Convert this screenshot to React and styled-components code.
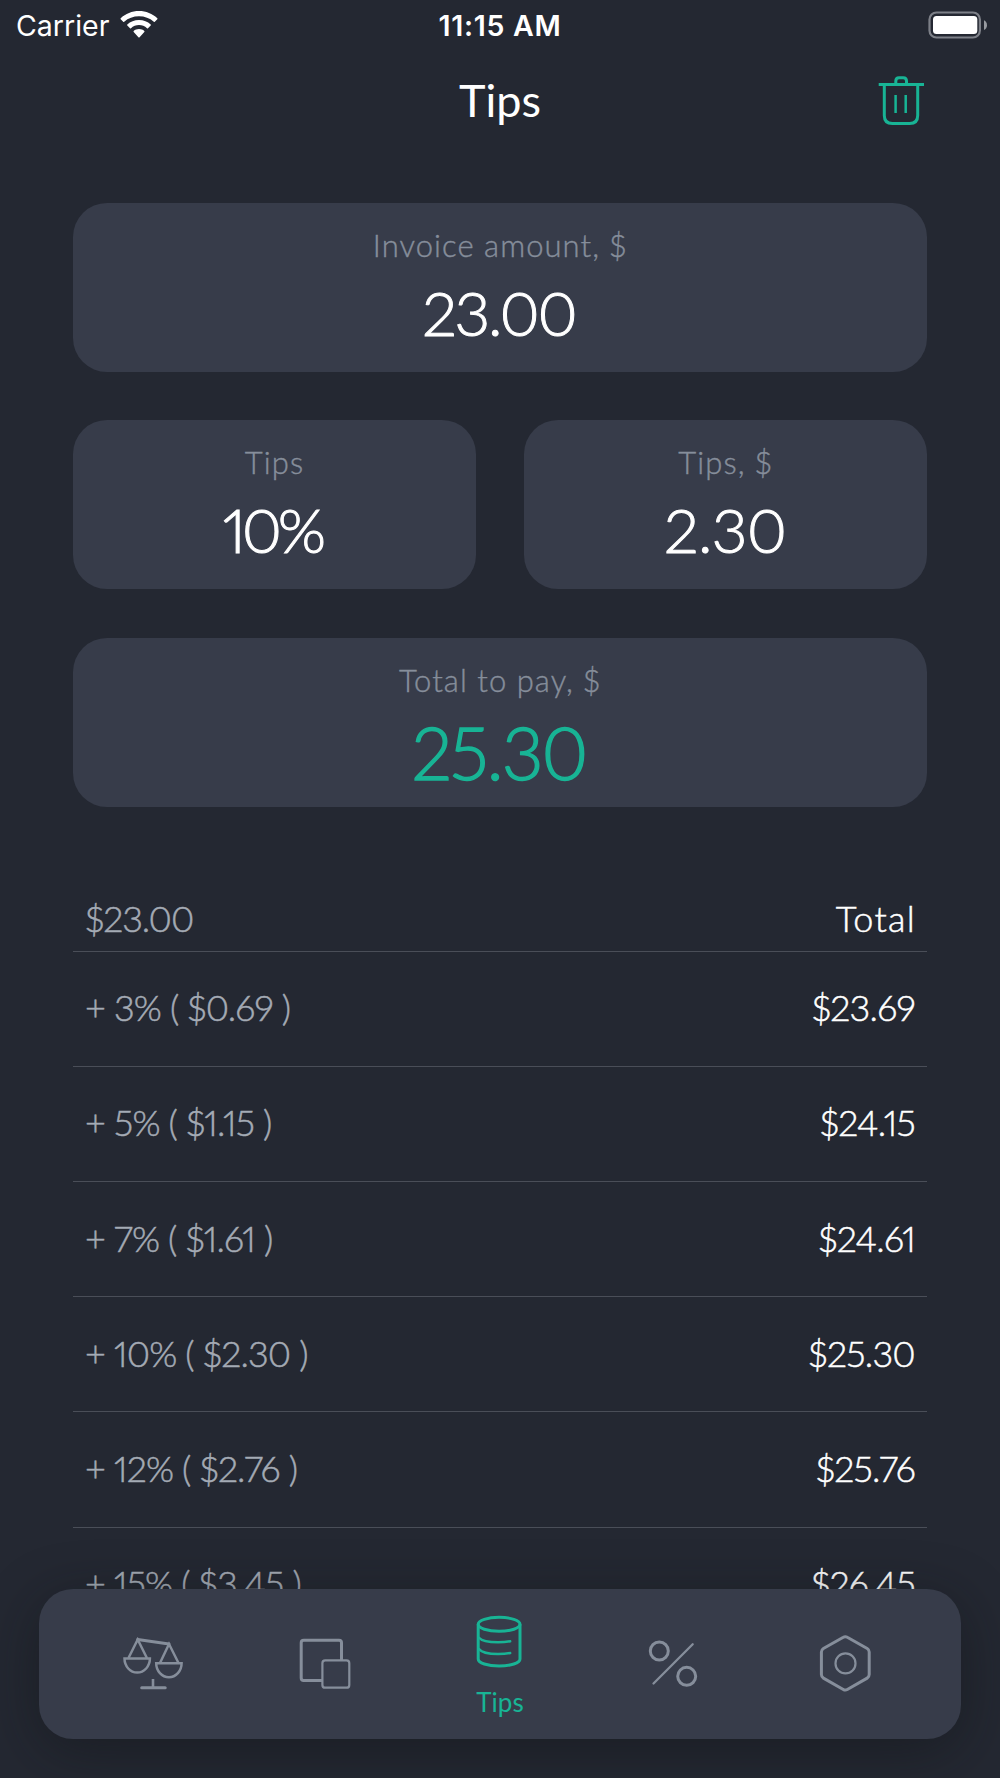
import React from "react";
import styled, { createGlobalStyle } from "styled-components";

const COLORS = {
  background: "#242832",
  panel: "#373c4a",
  label: "#868e9b",
  muted: "#a4abb5",
  line: "#4a4e58",
  green: "#18b495",
  white: "#ffffff",
};

const ROWS = [
  { label: "+ 3% ( $0.69 )", total: "$23.69" },
  { label: "+ 5% ( $1.15 )", total: "$24.15" },
  { label: "+ 7% ( $1.61 )", total: "$24.61" },
  { label: "+ 10% ( $2.30 )", total: "$25.30" },
  { label: "+ 12% ( $2.76 )", total: "$25.76" },
  { label: "+ 15% ( $3.45 )", total: "$26.45" },
];

function WifiIcon() {
  return (
    <svg width="38" height="28" viewBox="0 0 38 28" fill={COLORS.white}>
      <path d="M19 0C12 0 5.500 2.700 .7 7.200q-.5.500 0 1l2.500 2.500q.5.500 1 0C8.200 7.100 13.400 5.200 19 5.200s10.800 1.900 14.800 5.500q.5.500 1 0l2.500-2.500q.5-.5 0-1C32.500 2.700 26 0 19 0z" />
      <path d="M19 9c-4.600 0-8.600 1.700-11.700 4.500q-.5.500 0 1l2.700 2.700q.5.500 1 0c2.200-1.900 5-3.100 8-3.100s5.800 1.200 8 3.100q.5.500 1 0l2.700-2.700q.5-.5 0-1C27.600 10.700 23.600 9 19 9z" />
      <path d="M19 18c-2.100 0-3.900.7-5.300 1.900q-.5.500 0 1l4.700 5.400q.6.600 1.200 0l4.700-5.400q.5-.5 0-1C22.900 18.700 21.100 18 19 18z" />
    </svg>
  );
}

function BatteryIcon() {
  return (
    <svg width="60" height="28" viewBox="0 0 60 28">
      <rect
        x="1.5"
        y="1.5"
        width="50.4"
        height="25"
        rx="7"
        fill="none"
        stroke="#7d8088"
        strokeWidth="2.2"
      />
      <rect x="5" y="5" width="44.3" height="18" rx="3.5" fill="#fff" />
      <path d="M56 9.300c1.800.8 3 2.700 3 4.900s-1.200 4.100-3 4.900z" fill="#989ba1" />
    </svg>
  );
}

function TrashIcon() {
  return (
    <LineIcon viewBox="0 0 64 64">
      <path d="M8.700 14.500H54M25.800 14.500V11q0-3.200 3.200-3.200h4.300q3.200 0 3.200 3.200v3.500" />
      <path d="M14.300 14.500V45.500q0 8 8 8H39.700q8 0 8-8V14.500" />
      <path d="M25.600 25V43M35.700 25V43" strokeWidth="2.5" />
    </LineIcon>
  );
}

function ScalesIcon() {
  return (
    <LineIcon viewBox="0 0 64 64">
      <g strokeWidth="2.5">
        <path d="M7.500 26 16.700 7.500 25.900 26M39 31 48 12 57.500 31" />
        <path d="M3.500 26.600H28.900a12.700 14 0 0 1-25.400 0zM35.200 31.200H60.600a12.700 14 0 0 1-25.400 0z" />
      </g>
      <path d="M16.700 7.500 48 11.900" strokeLinecap="round" />
      <path d="M32 47V55.700" strokeWidth="2.6" />
      <path d="M20.700 55.700H44.200" strokeLinecap="round" />
    </LineIcon>
  );
}

function UnitsIcon() {
  return (
    <LineIcon viewBox="1 0 64 64">
      <rect x="8.2" y="8.2" width="40.3" height="40.3" rx="2.5" />
      <rect
        x="29.4"
        y="28.4"
        width="26.9"
        height="27.3"
        rx="2.8"
        strokeWidth="2.2"
        fill={COLORS.panel}
      />
    </LineIcon>
  );
}

function CoinsIcon() {
  return (
    <LineIcon viewBox="0 0 64 64">
      <ellipse cx="32.1" cy="14.3" rx="20.9" ry="7" />
      <path d="M11.200 14.300V49c0 4 9.400 7 20.900 7s20.900-3 20.900-7V14.300" />
      <g strokeWidth="2.4" strokeLinecap="round">
        <path d="M12 27.800c2.500 3 9 4.500 19 4.500 5 0 9-.4 12.200-1" />
        <path d="M12 39c2.500 3.500 9 5 19 5 5 0 9-.4 12.200-1" />
      </g>
    </LineIcon>
  );
}

function PercentIcon() {
  return (
    <LineIcon viewBox="-1 0 64 64">
      <circle cx="18.3" cy="19" r="9" />
      <circle cx="45.7" cy="44.3" r="9" />
      <path d="M51.700 12.200 12.500 51.500" strokeWidth="2.3" strokeLinecap="round" />
    </LineIcon>
  );
}

function SettingsIcon() {
  return (
    <LineIcon viewBox="0 0 64 64">
      <path d="M30.300 5.300q2-1.200 4 0L54.200 16.500q2 1.200 2 3.500V42.600q0 2.300-2 3.500L34.300 57.500q-2 1.200-4 0L10.400 46.100q-2-1.200-2-3.500V20q0-2.300 2-3.500z" />
      <circle cx="32.5" cy="31.4" r="10" strokeWidth="2.2" />
    </LineIcon>
  );
}

function AmountCard({ label, value, spacing, total }) {
  return (
    <Card>
      <CardLabel>{label}</CardLabel>
      <CardValue $total={total} $spacing={spacing}>
        {value}
      </CardValue>
    </Card>
  );
}

function App() {
  return (
    <Screen>
      <GlobalStyle />
      <StatusBar>
        <Carrier>
          <span>Carrier</span>
          <WifiIcon />
        </Carrier>
        <Clock>11:15 AM</Clock>
        <Battery>
          <BatteryIcon />
        </Battery>
      </StatusBar>

      <Header>
        <Title>Tips</Title>
        <ClearButton aria-label="Clear">
          <TrashIcon />
        </ClearButton>
      </Header>

      <Content>
        <Cards>
          <AmountCard label="Invoice amount, $" value="23.00" spacing={-2.2} />
          <CardPair>
            <AmountCard label="Tips" value="10%" spacing={-4.3} />
            <AmountCard label="Tips, $" value="2.30" spacing={-0.7} />
          </CardPair>
          <AmountCard
            label="Total to pay, $"
            value="25.30"
            spacing={-1.8}
            total
          />
        </Cards>

        <TableHead>
          <Muted $spacing={-1.1}>$23.00</Muted>
          <HeadTotal $spacing={1.3}>Total</HeadTotal>
        </TableHead>
        {ROWS.map((row) => (
          <TableRow key={row.label}>
            <Muted $spacing={-0.85}>{row.label}</Muted>
            <Total $spacing={-0.75}>{row.total}</Total>
          </TableRow>
        ))}
      </Content>

      <TabBar>
        <Tab>
          <ScalesIcon />
        </Tab>
        <Tab>
          <UnitsIcon />
        </Tab>
        <Tab $active>
          <CoinsIcon />
          <TabLabel>Tips</TabLabel>
        </Tab>
        <Tab>
          <PercentIcon />
        </Tab>
        <Tab>
          <SettingsIcon />
        </Tab>
      </TabBar>
    </Screen>
  );
}

const GlobalStyle = createGlobalStyle`
  * {
    box-sizing: border-box;
  }
  body {
    margin: 0;
    background: ${COLORS.background};
  }
`;

const Screen = styled.div`
  position: relative;
  width: 1000px;
  height: 1778px;
  overflow: hidden;
  background: ${COLORS.background};
  color: ${COLORS.white};
  font-family: Lato, "Open Sans", sans-serif;
  font-weight: 300;
  font-variant-numeric: proportional-nums;
`;

const LineIcon = styled.svg.attrs((props) => ({
  strokeWidth: props.strokeWidth || 3,
}))`
  display: block;
  flex: none;
  width: 64px;
  height: 64px;
  fill: none;
  stroke: currentColor;
`;

const StatusBar = styled.div`
  display: grid;
  grid-template-columns: 1fr auto 1fr;
  align-items: center;
  height: 50px;
  padding: 1px 12px 0;
  font-family: Inter, sans-serif;
  font-size: 28.5px;
  line-height: 48px;
`;

const Carrier = styled.div`
  display: flex;
  align-items: center;
  gap: 11px;
  padding-left: 4px;
  font-weight: 400;

  svg {
    margin-bottom: 2px;
  }
`;

const Clock = styled.div`
  font-weight: 600;
  letter-spacing: 0.7px;
`;

const Battery = styled.div`
  display: flex;
  justify-content: flex-end;
  padding-bottom: 2px;
`;

const Header = styled.div`
  display: grid;
  grid-template-columns: 1fr auto 1fr;
  align-items: center;
  height: 153px;
  padding: 0 66px 51px;
`;

const Title = styled.h1`
  grid-column: 2;
  margin: 0;
  padding-bottom: 3px;
  font-size: 45px;
  font-weight: 400;
  line-height: 60px;
`;

const ClearButton = styled.button`
  justify-self: end;
  padding: 2px 0 0;
  border: none;
  background: none;
  color: ${COLORS.green};
`;

const Content = styled.div`
  padding: 0 73px;
`;

const Cards = styled.div`
  display: flex;
  flex-direction: column;
  gap: 48.3px;
`;

const CardPair = styled.div`
  display: grid;
  grid-template-columns: 1fr 1fr;
  gap: 48px;
`;

const Card = styled.div`
  height: 169px;
  padding-top: 22px;
  border-radius: 34px;
  background: ${COLORS.panel};
  text-align: center;
`;

const CardLabel = styled.div`
  color: ${COLORS.label};
  font-size: 31px;
  line-height: 40px;
  letter-spacing: 0.034em;
  -webkit-text-stroke: 0.4px currentColor;
`;

/* the indent evens out the spacing after the last digit, so the value stays centred */
const CardValue = styled.div`
  margin-top: ${(props) => (props.$total ? 17.5 : 12)}px;
  color: ${(props) => (props.$total ? COLORS.green : COLORS.white)};
  font-size: ${(props) => (props.$total ? 72 : 62)}px;
  line-height: 70px;
  letter-spacing: ${(props) => props.$spacing}px;
  text-indent: ${(props) => props.$spacing}px;
  -webkit-text-stroke: ${(props) => (props.$total ? 1.4 : 1)}px currentColor;
`;

const TableHead = styled.div`
  display: flex;
  justify-content: space-between;
  height: 145px;
  padding: 87px 12px 0;
  border-bottom: 1px solid ${COLORS.line};
  font-size: 36px;
  line-height: 48px;
  -webkit-text-stroke: 0.5px currentColor;
`;

const TableRow = styled(TableHead)`
  align-items: center;
  height: 115.2px;
  padding: 0 12px 3px;
`;

const Muted = styled.span`
  color: ${COLORS.muted};
  letter-spacing: ${(props) => props.$spacing}px;
`;

const Total = styled.span`
  letter-spacing: ${(props) => props.$spacing}px;
`;

const HeadTotal = styled(Total)`
  margin-right: -1px;
`;

const TabBar = styled.nav`
  position: absolute;
  left: 39px;
  right: 39px;
  bottom: 39px;
  display: grid;
  grid-template-columns: repeat(5, 173px);
  justify-content: center;
  height: 150px;
  padding-right: 3px;
  border-radius: 34px;
  background: ${COLORS.panel};
  box-shadow: 0 12px 56px rgba(16, 17, 20, 0.45);
`;

const Tab = styled.div`
  display: flex;
  flex-direction: column;
  align-items: center;
  padding-top: ${(props) => (props.$active ? 21 : 43)}px;
  color: ${(props) => (props.$active ? COLORS.green : COLORS.label)};
`;

const TabLabel = styled.div`
  margin-top: 12px;
  padding-left: 3px;
  font-size: 26px;
  font-weight: 400;
  line-height: 32px;
`;

export default App;
